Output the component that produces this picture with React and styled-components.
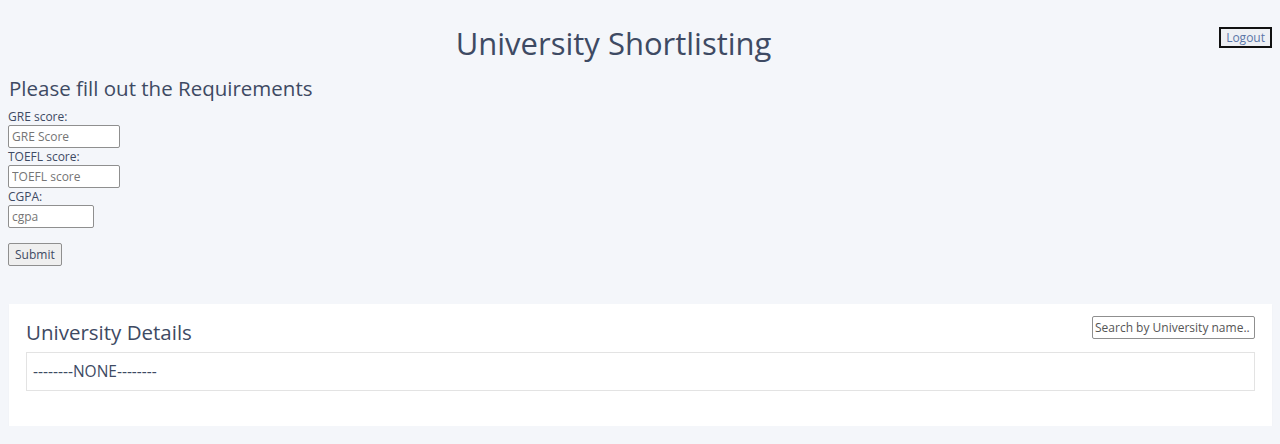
import React from "react";
import styled, { createGlobalStyle } from "styled-components";

const GlobalStyle = createGlobalStyle`
  body {
    margin: 0;
    background: #f4f6fa;
    font-family: "Open Sans", "Liberation Sans", sans-serif;
    color: #3e4a63;
  }
`;

const Page = styled.div`
  padding: 0 8px 0 8px;
`;

const Header = styled.header`
  display: flex;
  align-items: flex-start;
  padding-top: 21px;
  height: 52px;
`;

const Title = styled.h1`
  flex: 1;
  margin: 0;
  text-align: center;
  font-size: 31px;
  font-weight: 400;
  line-height: 44px;
  color: #3e4a63;
`;

const LogoutButton = styled.button`
  margin-top: 6px;
  height: 21px;
  padding: 0 5px;
  background: #eef0f4;
  border: 2px solid #111;
  color: #5b76a8;
  font-family: inherit;
  font-size: 12px;
`;

const Form = styled.form`
  display: flex;
  flex-direction: column;
  align-items: flex-start;
`;

const FormTitle = styled.h2`
  margin: 0 0 7px 1px;
  font-size: 20.5px;
  font-weight: 400;
  line-height: 28px;
  transform: translateY(1px);
`;

const Label = styled.label`
  font-size: 12px;
  line-height: 17px;
`;

const Input = styled.input`
  box-sizing: border-box;
  width: ${(p) => p.w}px;
  height: 23px;
  padding: 0 3px;
  border: 1px solid #8f8f8f;
  border-radius: 2px;
  background: #fff;
  font-family: inherit;
  font-size: 12px;
  color: #3e4a63;
  &::placeholder {
    color: #757575;
  }
`;

const SubmitButton = styled.button`
  margin-top: 15px;
  height: 23px;
  padding: 0 6px;
  border: 1px solid #8f8f8f;
  border-radius: 2px;
  background: #efefef;
  font-family: inherit;
  font-size: 12px;
  color: #3e4a63;
`;

const Card = styled.section`
  margin: 38px 0 0 1px;
  background: #fff;
  padding: 12px 17px 35px 17px;
  box-shadow: 0 1px 1px rgba(0, 0, 0, 0.06);
`;

const CardHead = styled.div`
  display: flex;
  justify-content: space-between;
  align-items: flex-start;
`;

const CardTitle = styled.h3`
  margin: 0;
  padding-top: 2px;
  font-size: 20.5px;
  font-weight: 400;
  line-height: 28px;
`;

const SearchInput = styled.input`
  box-sizing: border-box;
  width: 163px;
  height: 23px;
  padding: 0 2px;
  border: 1px solid #8f8f8f;
  border-radius: 2px;
  font-family: inherit;
  font-size: 12px;
  &::placeholder {
    color: #555;
  }
`;

const ResultBox = styled.div`
  margin-top: 6px;
  border: 1px solid #e3e3e3;
  padding: 9px 6px 10px;
  font-size: 15.5px;
  line-height: 18px;
`;

export default function App() {
  return (
    <>
      <GlobalStyle />
      <Page>
        <Header>
          <Title>University Shortlisting</Title>
          <LogoutButton>Logout</LogoutButton>
        </Header>
        <Form onSubmit={(e) => e.preventDefault()}>
          <FormTitle>Please fill out the Requirements</FormTitle>
          <Label>GRE score:</Label>
          <Input w={112} placeholder="GRE Score" />
          <Label>TOEFL score:</Label>
          <Input w={112} placeholder="TOEFL score" />
          <Label>CGPA:</Label>
          <Input w={86} placeholder="cgpa" />
          <SubmitButton type="submit">Submit</SubmitButton>
        </Form>
        <Card>
          <CardHead>
            <CardTitle>University Details</CardTitle>
            <SearchInput placeholder="Search by University name.." />
          </CardHead>
          <ResultBox>--------NONE--------</ResultBox>
        </Card>
      </Page>
    </>
  );
}
